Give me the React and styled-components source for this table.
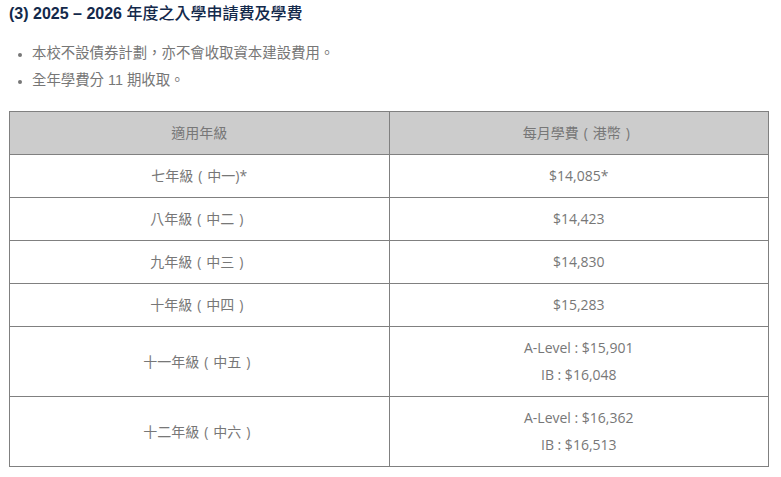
import React from 'react'
import styled, {createGlobalStyle} from 'styled-components'

const Global = createGlobalStyle`
  body {
    margin: 0;
    background: #fff;
  }
`

const Page = styled.div`
  padding: 4px 12px 0 9px;
  font-family: "Liberation Sans", Arial, "Noto Sans CJK TC", sans-serif;
`

const Title = styled.h3`
  margin: 0;
  font-size: 16px;
  line-height: 20px;
  font-weight: bold;
  color: #13294b;

  span {
    font-weight: 500;
  }
`

const List = styled.ul`
  margin: 16px 0 0;
  padding-left: 23px;
  color: #777;
  font-size: 14.4px;
  line-height: 27px;

  li::marker {
    font-size: 12px;
  }
`

const Table = styled.table`
  margin-top: 17px;
  width: 760px;
  border-collapse: collapse;
  table-layout: fixed;
  font-family: "Open Sans", "Noto Sans CJK TC", sans-serif;
  font-size: 14px;
  line-height: 27px;
  color: #777;
`

const Th = styled.th`
  background: #cccccc;
  font-weight: normal;
  border: 1px solid #808080;
  padding: 7px 8px 8px;
  text-align: center;
`

const Td = styled.td`
  border: 1px solid #808080;
  padding: 7px 8px 8px;
  text-align: center;
`

// full-width bracket drawn centred in its em box
const Paren = styled.span`
  display: inline-block;
  width: 14px;
  text-align: center;
`

const Grade = ({name, level, star}) => (
  <>
    {name}
    <Paren>(</Paren>
    中{level}
    {star ? ')*' : <Paren>)</Paren>}
  </>
)

const rows = [
  ['七年級', '一', true, ['$14,085*']],
  ['八年級', '二', false, ['$14,423']],
  ['九年級', '三', false, ['$14,830']],
  ['十年級', '四', false, ['$15,283']],
  ['十一年級', '五', false, ['A-Level : $15,901', 'IB : $16,048']],
  ['十二年級', '六', false, ['A-Level : $16,362', 'IB : $16,513']],
]

const App = () => {
  return (
    <Page>
      <Global />
      <Title>(3) 2025 – 2026 <span>年度之入學申請費及學費</span></Title>
      <List>
        <li>本校不設債券計劃，亦不會收取資本建設費用。</li>
        <li>全年學費分 11 期收取。</li>
      </List>
      <Table>
        <thead>
          <tr>
            <Th>適用年級</Th>
            <Th>
              每月學費<Paren>(</Paren>港幣<Paren>)</Paren>
            </Th>
          </tr>
        </thead>
        <tbody>
          {rows.map(([name, level, star, fees]) => (
            <tr key={name}>
              <Td>
                <Grade name={name} level={level} star={star} />
              </Td>
              <Td>
                {fees.map((f) => (
                  <div key={f}>{f}</div>
                ))}
              </Td>
            </tr>
          ))}
        </tbody>
      </Table>
    </Page>
  )
}

export default App
